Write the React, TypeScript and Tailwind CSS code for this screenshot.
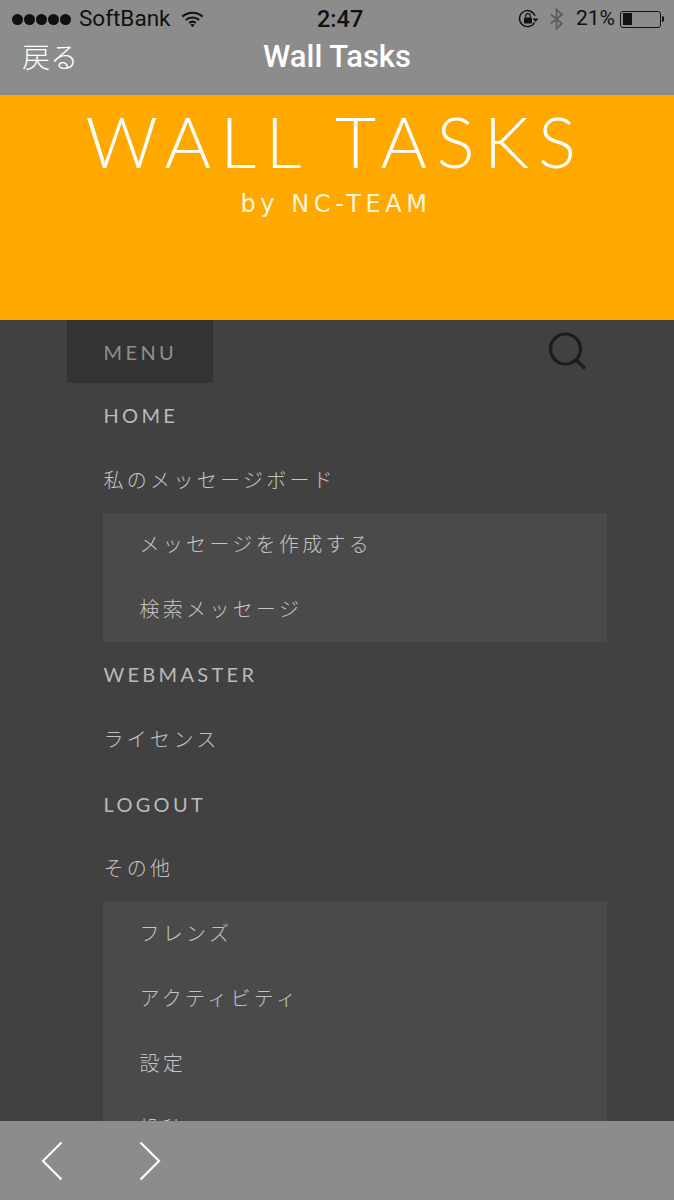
import { ReactNode } from 'react';

const LATO = 'font-["Lato","Noto_Sans_CJK_JP",sans-serif]';

function Row({ children, jp = false }: { children: ReactNode; jp?: boolean }) {
  return (
    <div
      className={`flex h-[64.8px] items-center whitespace-nowrap pb-[1px] pl-[36.5px] text-[20px] tracking-[3.3px] ${LATO} ${
        jp ? 'font-light text-[#c4c4c4]' : 'font-normal text-[#bababa]'
      }`}
    >
      {children}
    </div>
  );
}

function StatusBar() {
  return (
    <div className='relative flex h-[38px] items-center justify-between pl-[12px] pr-[10px] font-["Roboto",sans-serif] text-[21px] text-[#111]'>
      <div className="flex items-center">
        <div className="flex gap-[1px]">
          {[0, 1, 2, 3, 4].map((i) => (
            <span key={i} className="h-[11px] w-[11px] rounded-full bg-[#111]" />
          ))}
        </div>
        <span className="ml-[8px] text-[22.5px]">SoftBank</span>
        <svg className="ml-[11px]" width="23" height="18" viewBox="0 0 24 18" fill="none" stroke="#111" strokeWidth="2.2">
          <path d="M1.5 6.5c6-5.4 15-5.4 21 0" />
          <path d="M5 10c4-3.4 10-3.4 14 0" />
          <path d="M8.5 13.2c2-1.6 5-1.6 7 0" />
          <path d="M12 17.5l-2.4-2.8c1.4-.8 3.4-.8 4.8 0z" fill="#111" stroke="none" />
        </svg>
      </div>
      <span className="absolute left-[317px] top-[6px] text-[23.5px] font-medium leading-[26px]">2:47</span>
      <div className="flex items-center">
        <svg width="22" height="20" viewBox="0 0 22 20" fill="none">
          <path d="M16.5 13.5A8 8 0 1 1 17 6.8" stroke="#111" strokeWidth="1.4" />
          <path d="M14.5 9.5h6l-3 3.5z" fill="#111" />
          <rect x="6" y="8.5" width="8" height="6" rx="1" fill="#111" />
          <path d="M7.7 8.5V7a2.3 2.3 0 0 1 4.6 0v1.5" stroke="#111" strokeWidth="1.2" />
        </svg>
        <svg className="ml-[9px]" width="16" height="24" viewBox="0 0 16 22" fill="none" stroke="#5c5c5c" strokeWidth="1.8">
          <path d="M2 6.5l11 9-5.5 5V1.5l5.5 5-11 9" />
        </svg>
        <span className="ml-[11px]">21%</span>
        <div className="ml-[5px] flex items-center">
          <div className="h-[17px] w-[41px] rounded-[3px] border border-[#111] p-[1.5px]">
            <div className="h-full w-[9px] bg-[#111]" />
          </div>
          <div className="ml-[1px] h-[6px] w-[2px] rounded-r-full bg-[#111]" />
        </div>
      </div>
    </div>
  );
}

export default function App() {
  return (
    <div className="flex h-[1200px] w-[674px] flex-col overflow-hidden bg-[#414141]">
      <header className="h-[95px] shrink-0 bg-[#8c8c8c]">
        <StatusBar />
        <div className="relative flex h-[38px] items-center justify-center">
          <span className='absolute left-[22px] top-[0px] font-["Noto_Sans_CJK_JP",sans-serif] text-[28px] font-light leading-[36px] text-white'>
            戻る
          </span>
          <span className='font-["Roboto",sans-serif] text-[31px] font-medium text-white'>Wall Tasks</span>
        </div>
      </header>

      <div className="flex h-[225px] shrink-0 flex-col items-center bg-[#ffa800] text-white">
        <div className='mr-[3px] mt-[6px] whitespace-nowrap font-["Lato",sans-serif] text-[71px] font-light leading-[80px] tracking-[9.3px]'>
          WALL TASKS
        </div>
        <div className='mr-[2px] mt-[8px] whitespace-nowrap font-["DejaVu_Sans",sans-serif] text-[24px] font-normal leading-[30px] tracking-[4.6px] text-[#fff4dc]'>
          by NC-TEAM
        </div>
      </div>

      <main className="min-h-0 flex-1 overflow-hidden pl-[67px] pr-[67px]">
        <div className="flex h-[63px] items-center justify-between">
          <div className={`flex h-full w-[146px] items-center bg-[#333333] pl-[36.5px] text-[20px] tracking-[3.4px] text-[#8f8f8f] ${LATO}`}>
            MENU
          </div>
          <svg className="mr-[18px]" width="42" height="42" viewBox="0 0 42 42" fill="none" stroke="#1d1d1d" strokeWidth="3.2" strokeLinecap="round">
            <circle cx="18.5" cy="18" r="15" />
            <path d="M29.5 29.5l7.5 7" />
          </svg>
        </div>

        <Row>HOME</Row>
        <Row jp>私のメッセージボード</Row>
        <div className="ml-[36px] bg-[#4a4a4a]">
          <Row jp>メッセージを作成する</Row>
          <Row jp>検索メッセージ</Row>
        </div>
        <Row>WEBMASTER</Row>
        <Row jp>ライセンス</Row>
        <Row>LOGOUT</Row>
        <Row jp>その他</Row>
        <div className="ml-[36px] bg-[#4a4a4a]">
          <Row jp>フレンズ</Row>
          <Row jp>アクティビティ</Row>
          <Row jp>設定</Row>
          <Row jp>投稿</Row>
        </div>
      </main>

      <footer className="flex h-[79px] shrink-0 items-center bg-[#8c8c8c] pl-[41px]">
        <svg width="22" height="40" viewBox="0 0 22 40" fill="none" stroke="#fff" strokeWidth="2.2">
          <path d="M20.5 1.5L2 20l18.5 18.5" />
        </svg>
        <svg className="ml-[76px]" width="22" height="40" viewBox="0 0 22 40" fill="none" stroke="#fff" strokeWidth="2.2">
          <path d="M1.5 1.5L20 20 1.5 38.5" />
        </svg>
      </footer>
    </div>
  );
}
